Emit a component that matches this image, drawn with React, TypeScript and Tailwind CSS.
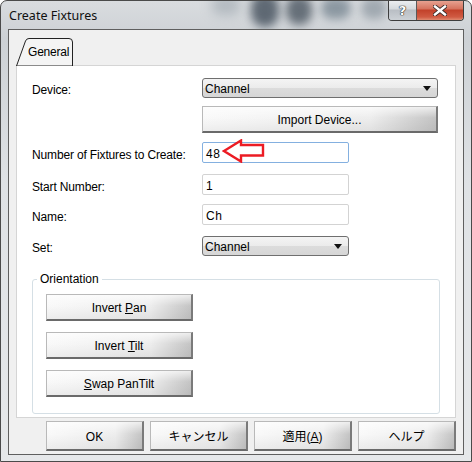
import React from 'react'

const ui = "font-['Liberation_Sans','Noto_Sans_CJK_JP',sans-serif] text-[12px] text-black"

const btnBg =
  'bg-[linear-gradient(to_bottom,rgba(255,255,255,0.7),rgba(255,255,255,0)_45%,rgba(0,0,0,0.05)),linear-gradient(to_right,#f9f9f9,#ededed_72%,#c4c4c4)]'

function PushButton({ children, className }: { children: React.ReactNode; className?: string }) {
  return (
    <button
      className={`flex items-center justify-center border-t border-l border-[#b9b9b9] border-r-2 border-b-2 border-r-[#7a7a7a] border-b-[#6a6a6a] ${btnBg} ${className ?? ''}`}
    >
      <span className="translate-y-[1px]">{children}</span>
    </button>
  )
}

function ComboBox({ value, className }: { value: string; className?: string }) {
  return (
    <div
      className={`flex items-center h-[20px] rounded-[3px] border border-[#6f6f6f] pl-[2px] pr-[6px] bg-[linear-gradient(to_bottom,#f4f4f4,#ebebeb_50%,#dcdcdc_51%,#d6d6d6)] ${className ?? ''}`}
    >
      <span className="flex-1 translate-y-[1px] leading-none">{value}</span>
      <svg width="8" height="5" viewBox="0 0 8 5">
        <path d="M0 0 H8 L4 5 Z" fill="#111" />
      </svg>
    </div>
  )
}

function TextBox({ value, focused }: { value: string; focused?: boolean }) {
  return (
    <div
      className={`flex items-center h-[21px] w-[147px] rounded-[2px] border bg-white pl-[3px] ${
        focused ? 'border-[#84b0e0]' : 'border-[#d3d3d3]'
      }`}
    >
      <span className="translate-y-[1px] tracking-[0.6px]">{value}</span>
    </div>
  )
}

function Row({ label, children, className }: { label: string; children: React.ReactNode; className?: string }) {
  return (
    <div className={`flex items-center ${className ?? ''}`}>
      <span className="w-[170px] shrink-0 translate-y-[2px] leading-[14px] tracking-[-0.15px]">{label}</span>
      {children}
    </div>
  )
}

export default function App() {
  return (
    <div className={`${ui} w-[472px] h-[462px] overflow-hidden`}>
      <div className="relative flex flex-col w-[472px] h-[462px] rounded-t-[7px] border border-[#4a4a4a] bg-[linear-gradient(to_bottom,#d9dcdf,#cdd1d5_8%,#dfe2e5_40%,#e6e8ea)]">
        {/* title bar */}
        <div className="relative h-[29px] overflow-hidden">
          <div className="absolute left-[250px] top-[-8px] h-[34px] w-[28px] rounded-full bg-[#2d3a48] opacity-70 blur-[5px]" />
          <div className="absolute left-[285px] top-[-6px] h-[30px] w-[26px] rounded-full bg-[#37434f] opacity-70 blur-[5px]" />
          <div className="absolute left-[320px] top-[-4px] h-[22px] w-[30px] rounded-full bg-[#5a6c7a] opacity-60 blur-[5px]" />
          <div className="absolute left-[360px] top-[-4px] h-[22px] w-[26px] rounded-full bg-[#6a7884] opacity-50 blur-[5px]" />
          <div className="absolute left-[210px] top-[-6px] h-[20px] w-[30px] rounded-full bg-[#8f9aa3] opacity-50 blur-[6px]" />
          <span className="absolute left-[8px] top-[7px] font-['Noto_Sans','Liberation_Sans',sans-serif] text-[12.5px] leading-[16px] text-[#101010]">
            Create Fixtures
          </span>
          <div className="absolute right-[7px] top-[-1px] flex h-[21px] rounded-b-[4px] border border-t-0 border-[#3d3d3d] overflow-hidden">
            <div className="flex w-[28px] items-center justify-center border-r border-[#5a5a5a] bg-[linear-gradient(to_bottom,#eef0f2,#d5d9dd_45%,#b9bec4_50%,#ccd1d6)]">
              <span className="font-['DejaVu_Sans',sans-serif] text-[13px] font-bold leading-none text-white [text-shadow:0_0_1px_#222,0_0_1px_#222,0_0_1px_#222]">
                ?
              </span>
            </div>
            <div className="flex w-[46px] items-center justify-center bg-[linear-gradient(to_bottom,#e9a797,#d5725d_45%,#c2412a_50%,#d05a42_85%,#e08a70)]">
              <svg width="14" height="11" viewBox="0 0 14 11">
                <path d="M2 1.5 L12 9.5 M12 1.5 L2 9.5" stroke="#3a2a28" strokeWidth="4.2" strokeLinecap="square" />
                <path d="M2 1.5 L12 9.5 M12 1.5 L2 9.5" stroke="#fff" strokeWidth="2.4" strokeLinecap="square" />
              </svg>
            </div>
          </div>
        </div>

        {/* client area */}
        <div className="mx-[7px] mb-[6px] flex flex-1 flex-col border border-[#5f5f5f] bg-[#f0f0f0] px-[7px] pt-[8px] pb-[3px]">
          {/* tab strip */}
          <div className="flex">
            <div className="relative z-10 -mb-px h-[28px] w-[57px]">
              <svg className="absolute inset-0" width="57" height="28" viewBox="0 0 57 28">
                <path d="M0.5 28 L9.5 3 Q10.5 0.5 13 0.5 L53 0.5 Q56.5 0.5 56.5 4 L56.5 28 Z" fill="#f4f4f4" stroke="#222" strokeWidth="1" />
              </svg>
              <span className="absolute left-[12px] top-[7px] leading-[14px] tracking-[-0.2px]">General</span>
            </div>
          </div>

          {/* tab pane */}
          <div className="flex h-[353px] flex-col border border-[#d5d5d5] bg-white px-[15px] pt-[12px] pb-[4px]">
            <Row label="Device:">
              <ComboBox value="Channel" className="w-[236px]" />
            </Row>
            <div className="mt-[8px] flex">
              <div className="w-[170px] shrink-0" />
              <PushButton className="h-[27px] w-[236px]">Import Device...</PushButton>
            </div>
            <Row label="Number of Fixtures to Create:" className="relative mt-[9px]">
              <TextBox value="48" focused />
              <svg className="absolute left-[190px] top-[-3px]" width="44" height="24" viewBox="0 0 44 24">
                <path
                  d="M2 12 L19 1.5 L19 6 L41 6 L41 16.5 L19 16.5 L19 22.5 Z"
                  fill="none"
                  stroke="#ec1c24"
                  strokeWidth="2.4"
                  strokeLinejoin="miter"
                />
              </svg>
            </Row>
            <Row label="Start Number:" className="mt-[11px]">
              <TextBox value="1" />
            </Row>
            <Row label="Name:" className="mt-[9px]">
              <TextBox value="Ch" />
            </Row>
            <Row label="Set:" className="mt-[11px]">
              <ComboBox value="Channel" className="w-[147px]" />
            </Row>

            <fieldset className="mt-[16px] rounded-[3px] border border-[#d5dfe5] px-[13px] pt-[8px] pb-[16px]">
              <legend className="ml-[-9px] px-[3px] leading-[14px]">Orientation</legend>
              <div className="flex flex-col gap-[11px]">
                <PushButton className="h-[27px] w-[147px]">
                  Invert&nbsp;<span className="underline">P</span>an
                </PushButton>
                <PushButton className="h-[27px] w-[147px]">
                  Invert&nbsp;<span className="underline">T</span>ilt
                </PushButton>
                <PushButton className="h-[27px] w-[147px]">
                  <span className="underline">S</span>wap PanTilt
                </PushButton>
              </div>
            </fieldset>
          </div>

          {/* dialog buttons */}
          <div className="mt-[3px] flex justify-end gap-[6px]">
            <PushButton className="h-[30px] w-[98px]">OK</PushButton>
            <PushButton className="h-[30px] w-[98px]">キャンセル</PushButton>
            <PushButton className="h-[30px] w-[98px]">
              適用(<span className="underline">A</span>)
            </PushButton>
            <PushButton className="h-[30px] w-[98px]">ヘルプ</PushButton>
          </div>
        </div>
      </div>
    </div>
  )
}
